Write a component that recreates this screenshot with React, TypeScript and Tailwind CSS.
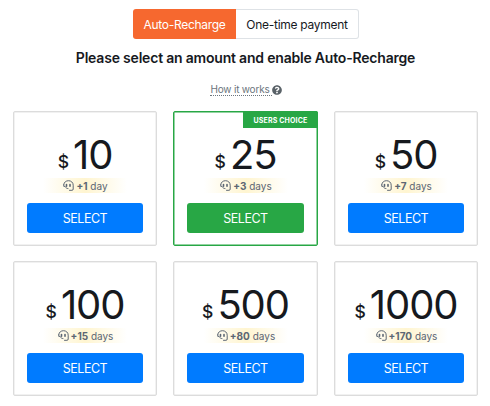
import React from "react";
import { FaQuestionCircle } from "react-icons/fa";

type Plan = {
  amount: string;
  bonus: string;
  unit: string;
  featured?: boolean;
};

const plans: Plan[] = [
  { amount: "10", bonus: "+1", unit: "day" },
  { amount: "25", bonus: "+3", unit: "days", featured: true },
  { amount: "50", bonus: "+7", unit: "days" },
  { amount: "100", bonus: "+15", unit: "days" },
  { amount: "500", bonus: "+80", unit: "days" },
  { amount: "1000", bonus: "+170", unit: "days" },
];

function SupportIcon() {
  return (
    <svg width="11" height="11" viewBox="0 0 22 22" fill="none" stroke="#5c6673" strokeWidth="2" strokeLinecap="round" strokeLinejoin="round">
      <path d="M1.500 9C2.200 4.300 6 1.400 11 1.400c5.200 0 9.400 3.600 9.400 9V18c0 1.800-.8 2.600-2.500 2.600H13" />
      <path d="M1.500 9.500v3.200h2.500c1.200 2.600 3.300 4.300 6 4.500" />
      <path d="M7 9v3.500M14 9v3.500" strokeWidth="3.200" />
    </svg>
  );
}

function PlanCard({ plan }: { plan: Plan }) {
  return (
    <div
      className={`relative flex h-[135px] flex-col rounded-[2px] border bg-white px-[13px] pt-[23px] ${
        plan.featured ? "border-[#28a745] shadow-[inset_0_0_0_0.5px_#28a745]" : "border-[#dcdcdc] shadow-[inset_0_0_0_0.5px_#e4e4e4]"
      }`}
    >
      {plan.featured && (
        <div className="absolute -top-px -right-px flex h-[17px] w-[75px] items-center justify-center rounded-tr-[2px] bg-[#28a745] pt-[3px] text-[7px] font-bold tracking-[0.15px] whitespace-nowrap text-white">
          USERS CHOICE
        </div>
      )}
      <div className="flex h-10 items-baseline justify-center gap-[4px] text-[#16191e]">
        <span className="relative -top-px text-[17.5px] leading-10 font-medium">$</span>
        <span className="text-[40px] leading-10 tracking-[-1.1px]">{plan.amount}</span>
      </div>
      <div className="mx-auto mt-[3px] flex h-[15px] w-[84px] items-center justify-center gap-[2px] bg-linear-to-r from-white via-[#fff5d0] via-50% to-white pl-px text-[10px] leading-[15px] whitespace-nowrap text-[#5c6673]">
        <SupportIcon />
        <span className="pt-px">
          <b className="font-bold">{plan.bonus}</b> {plan.unit}
        </span>
      </div>
      <button
        className={`mt-[10px] h-[30px] w-full rounded-[3px] pt-[2px] text-[12.5px] tracking-[-0.5px] text-white ${
          plan.featured ? "bg-[#28a745]" : "bg-[#007bff]"
        }`}
      >
        SELECT
      </button>
    </div>
  );
}

export default function App() {
  return (
    <main className="h-[406px] w-[490px] overflow-hidden bg-white pt-[9px] font-['Inter',sans-serif] text-[#16191e]">
      <div className="ml-[133px] flex h-[30px] w-[226px] text-[12px] tracking-[-0.28px]">
        <button className="w-[103px] rounded-l-[3px] bg-[#f6682f] pt-px text-white">Auto-Recharge</button>
        <button className="flex-1 rounded-r-[3px] border border-l-0 border-[#dee2e6] pt-px">One-time payment</button>
      </div>
      <h1 className="mt-[9px] pl-px text-center text-[14px] leading-[20px] font-semibold tracking-[-0.2px]">
        Please select an amount and enable Auto-Recharge
      </h1>
      <div className="mt-[14px] flex h-[15px] items-center justify-center pl-[2px] text-[10px] tracking-[-0.2px] text-[#6c757d]">
        <span className="border-b border-dotted border-[#6c757d] pr-[2px] leading-[12px]">How it works</span>
        <FaQuestionCircle className="text-[#5a6268]" size={10} />
      </div>
      <div className="mt-[14px] ml-[13px] grid grid-cols-[144px_145px_144px] gap-x-4 gap-y-[15px]">
        {plans.map((plan) => (
          <PlanCard key={plan.amount} plan={plan} />
        ))}
      </div>
    </main>
  );
}
